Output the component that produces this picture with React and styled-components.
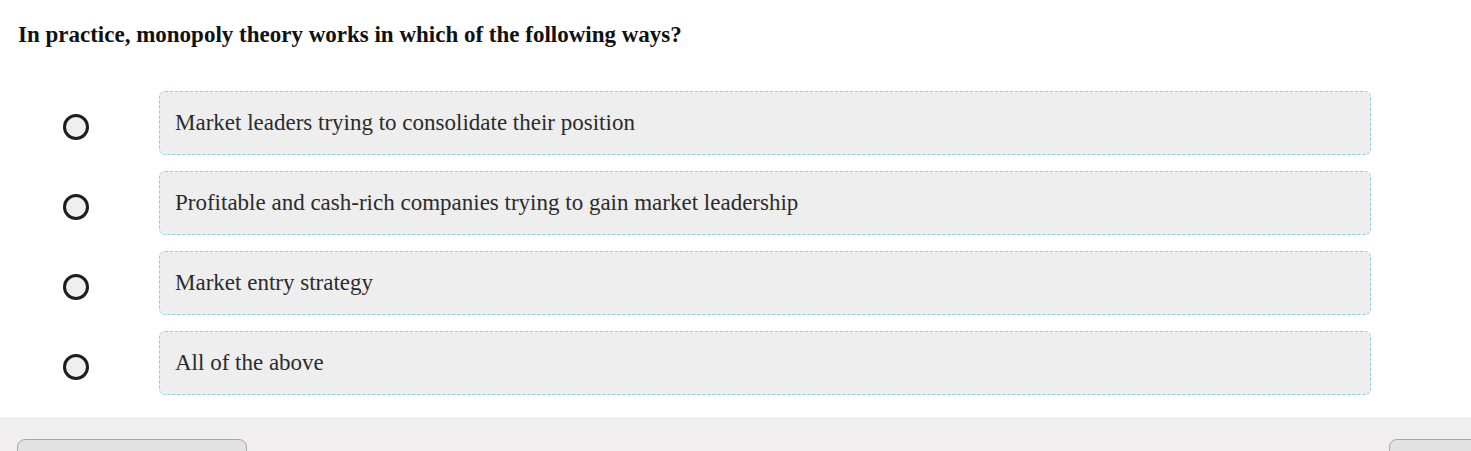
import styled, { createGlobalStyle } from "styled-components";

const GlobalStyle = createGlobalStyle`
  html, body {
    margin: 0;
    padding: 0;
    overflow: hidden;
    background: #ffffff;
  }
  body {
    font-family: "Liberation Serif", "Times New Roman", serif;
  }
`;

const options = [
  "Market leaders trying to consolidate their position",
  "Profitable and cash-rich companies trying to gain market leadership",
  "Market entry strategy",
  "All of the above",
];

function App() {
  return (
    <>
      <GlobalStyle />
      <Page>
        <Question>In practice, monopoly theory works in which of the following ways?</Question>
        <OptionList>
          {options.map((text, i) => (
            <OptionRow key={i}>
              <RadioCell>
                <Radio />
              </RadioCell>
              <OptionBox>{text}</OptionBox>
            </OptionRow>
          ))}
        </OptionList>
      </Page>
      <Footer>
        <NavButton />
        <NavButton />
      </Footer>
    </>
  );
}

export default App;

const Page = styled.div`
  display: flex;
  flex-direction: column;
  padding: 22px 0 22px 0;
  width: 1471px;
`;

const Question = styled.h1`
  margin: 0 0 0 18px;
  font-size: 23px;
  line-height: 26px;
  font-weight: bold;
  color: #111;
`;

const OptionList = styled.ul`
  list-style: none;
  margin: 43px 0 0 0;
  padding: 0;
  display: flex;
  flex-direction: column;
  gap: 16px;
`;

const OptionRow = styled.li`
  display: flex;
  align-items: center;
`;

const RadioCell = styled.div`
  width: 159px;
  display: flex;
  justify-content: flex-start;
  padding-left: 63px;
  box-sizing: border-box;
  padding-top: 8px;
`;

const Radio = styled.span`
  display: block;
  width: 26px;
  height: 26px;
  box-sizing: border-box;
  border-radius: 50%;
  border: 3px solid #1e1e1e;
  background: #efefef;
`;

const OptionBox = styled.div`
  width: 1212px;
  height: 64px;
  box-sizing: border-box;
  display: flex;
  align-items: center;
  padding: 0 15px;
  background: #eeeeee;
  border: 1px dashed #8ccfe2;
  border-radius: 6px;
  font-size: 23px;
  color: #2b2b2b;
`;

const Footer = styled.div`
  width: 1636px;
  height: 60px;
  background: #f0eeee;
  display: flex;
  justify-content: space-between;
  align-items: flex-start;
  padding: 22px 17px 0 17px;
  box-sizing: border-box;
`;

const NavButton = styled.button`
  width: 230px;
  height: 40px;
  flex-shrink: 0;
  background: #e2e2e2;
  border: 1px solid #a9a9a9;
  border-radius: 8px;
`;
